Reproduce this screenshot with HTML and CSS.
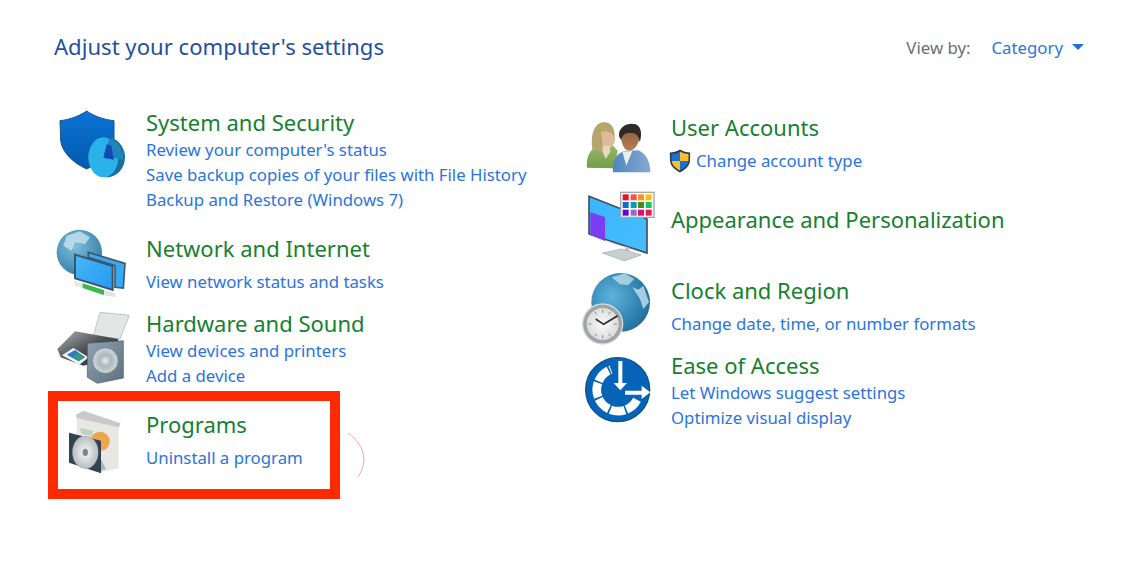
FILE: index.html

```html
<!DOCTYPE html>
<html lang="en">
<head>
    <meta charset="UTF-8">
    <title>Control Panel</title>
    <link rel="stylesheet" href="styles.css">
</head>
<body>
    <div class="page">
        <div class="header">
            <h1>Adjust your computer's settings</h1>
            <div class="view-by">
                <span class="view-label">View by:</span>
                <a href="#" class="view-value">Category</a>
                <span class="caret"></span>
            </div>
        </div>

        <div class="columns">
            <div class="column left-column">
                <div class="category">
                    <svg class="icon" viewBox="42 -15 240 240">
                        <defs>
                            <linearGradient id="shieldFill" x1="0" y1="0" x2="0" y2="1"><stop offset="0" stop-color="#0a74d6"/><stop offset="1" stop-color="#0459ad"/></linearGradient>
                        </defs>
                        <path d="M140 36C120 50 90 62 60 65L62 125C66 160 100 192 140 210C180 192 218 160 222 125L222 65C190 62 160 50 140 36Z" fill="url(#shieldFill)" stroke="#1b5488" stroke-width="3"/>
                        <ellipse cx="200" cy="175" rx="55" ry="60" fill="#17719f"/>
                        <ellipse cx="190" cy="175" rx="45" ry="60" fill="#2ab3ea"/>
                        <path d="M196 172L207 118C232 124 250 150 250 182Z" fill="#1f86bd"/>
                        <path d="M200 136L214 140L222 182L190 176Z" fill="#1249b5"/>
                    </svg>
                    <div class="text">
                        <a href="#" class="title">System and Security</a>
                        <a href="#" class="link">Review your computer's status</a>
                        <a href="#" class="link">Save backup copies of your files with File History</a>
                        <a href="#" class="link">Backup and Restore (Windows 7)</a>
                    </div>
                </div>

                <div class="category">
                    <svg class="icon" viewBox="42 -12 240 240">
                        <defs>
                            <radialGradient id="globeFill" cx="0.4" cy="0.35" r="0.75"><stop offset="0" stop-color="#7fc0dd"/><stop offset="1" stop-color="#2c78a2"/></radialGradient>
                            <linearGradient id="screenFill" x1="0" y1="0" x2="1" y2="1"><stop offset="0" stop-color="#49b7fb"/><stop offset="1" stop-color="#2399ee"/></linearGradient>
                        </defs>
                        <circle cx="118" cy="85" r="68" fill="url(#globeFill)"/>
                        <path d="M80 35L120 22L150 40L135 60L105 55L95 80L70 65Z" fill="#cfe6ef" opacity="0.75"/>
                        <path d="M145 85L255 118L250 192L225 190L225 125L145 100Z" fill="#39a8f4" stroke="#44596b" stroke-width="5"/>
                        <path d="M105 92L218 126L218 198L105 163Z" fill="url(#screenFill)" stroke="#3d5468" stroke-width="6"/>
                        <path d="M103 170L128 178L128 192L103 184Z" fill="#e3e8e8"/>
                        <path d="M128 178L192 198L192 214L128 192Z" fill="#3cb94c"/>
                        <path d="M192 198L226 208L226 220L192 214Z" fill="#dfe4e4"/>
                    </svg>
                    <div class="text">
                        <a href="#" class="title">Network and Internet</a>
                        <a href="#" class="link single">View network status and tasks</a>
                    </div>
                </div>

                <div class="category">
                    <svg class="icon" viewBox="42 213 240 240">
                        <defs>
                            <linearGradient id="printerBody" x1="0" y1="0" x2="1" y2="1"><stop offset="0" stop-color="#aeb3b6"/><stop offset="0.5" stop-color="#4a4e51"/><stop offset="1" stop-color="#26292b"/></linearGradient>
                            <linearGradient id="boxFill" x1="0" y1="0" x2="1" y2="1"><stop offset="0" stop-color="#8fa2af"/><stop offset="1" stop-color="#5b7180"/></linearGradient>
                            <radialGradient id="coneFill"><stop offset="0" stop-color="#e9eeee"/><stop offset="0.45" stop-color="#a9b7bb"/><stop offset="1" stop-color="#cfd8da"/></radialGradient>
                        </defs>
                        <path d="M180 265L268 274L240 345L160 335Z" fill="#e4e6e6" stroke="#a9adaf" stroke-width="2"/>
                        <path d="M52 375L105 322L235 345L225 400L130 425L62 400Z" fill="url(#printerBody)"/>
                        <path d="M66 394L100 372L146 400L118 422Z" fill="#f1f4f6"/>
                        <path d="M80 392L105 378L136 400L116 412Z" fill="#2b78cf"/>
                        <path d="M100 398L115 388L132 400L117 408Z" fill="#3f9f62"/>
                        <path d="M142 358L250 350L250 462L172 478L142 460Z" fill="url(#boxFill)" stroke="#48596a" stroke-width="2"/>
                        <circle cx="196" cy="410" r="38" fill="url(#coneFill)" stroke="#7b8c97" stroke-width="2"/>
                    </svg>
                    <div class="text">
                        <a href="#" class="title">Hardware and Sound</a>
                        <a href="#" class="link">View devices and printers</a>
                        <a href="#" class="link">Add a device</a>
                    </div>
                </div>

                <div class="category">
                    <svg class="icon" viewBox="42 36 240 240">
                        <defs>
                            <radialGradient id="discFill"><stop offset="0" stop-color="#8f989c"/><stop offset="0.25" stop-color="#e8ebec"/><stop offset="1" stop-color="#b4bbbe"/></radialGradient>
                        </defs>
                        <path d="M108 92L130 80L242 118L235 135L110 105Z" fill="#c9c9c9"/>
                        <path d="M110 102L236 130L236 252L178 266L110 240Z" fill="#e7e7e6"/>
                        <path d="M120 132L160 140L155 155L125 150Z" fill="#b9d3c1"/>
                        <circle cx="180" cy="172" r="29" fill="#eea64c"/>
                        <path d="M182 225L198 255L180 262Z" fill="#9fbdaa"/>
                        <path d="M87 146L183 170L183 268L87 236Z" fill="#33424f"/>
                        <ellipse cx="136" cy="205" rx="39" ry="50" fill="url(#discFill)"/>
                        <ellipse cx="136" cy="205" rx="8" ry="11" fill="#7d888d"/>
                    </svg>
                    <div class="text">
                        <a href="#" class="title">Programs</a>
                        <a href="#" class="link single">Uninstall a program</a>
                    </div>
                </div>
            </div>

            <div class="column right-column">
                <div class="category">
                    <svg class="icon" viewBox="15 -30 240 240">
                        <defs>
                            <linearGradient id="womanBody" x1="0" y1="0" x2="0" y2="1"><stop offset="0" stop-color="#97bb6a"/><stop offset="1" stop-color="#729c4b"/></linearGradient>
                            <linearGradient id="manBody" x1="0" y1="0" x2="1" y2="0"><stop offset="0" stop-color="#4f86c0"/><stop offset="1" stop-color="#86a9cf"/></linearGradient>
                            <linearGradient id="manFace" x1="0" y1="0" x2="0" y2="1"><stop offset="0" stop-color="#8a5a38"/><stop offset="1" stop-color="#b37f55"/></linearGradient>
                        </defs>
                        <path d="M36 176C32 140 48 116 78 106L112 108L128 125L118 178Z" fill="url(#womanBody)"/>
                        <path d="M52 120C46 80 56 40 88 40C116 40 122 70 118 100L100 124L72 128Z" fill="#b6a56c"/>
                        <path d="M78 70C90 62 112 68 120 88L112 112L98 122L84 112Z" fill="#dfbc98"/>
                        <path d="M84 110L104 110L106 128L92 150L82 126Z" fill="#ecd5bb"/>
                        <path d="M114 190C110 156 124 134 148 126L190 124C214 134 226 160 226 190Z" fill="url(#manBody)"/>
                        <path d="M142 128L172 126L154 170Z" fill="#e9eef1"/>
                        <path d="M138 86C136 62 150 50 170 52C188 54 196 70 192 92C188 112 172 130 156 124C146 118 140 104 138 86Z" fill="url(#manFace)"/>
                        <path d="M133 84C126 58 156 38 182 46C202 54 200 82 194 100C192 82 184 72 170 72C154 72 146 72 138 92Z" fill="#2e2a27"/>
                    </svg>
                    <div class="text">
                        <a href="#" class="title">User Accounts</a>
                        <div class="link-row single">
                            <svg class="uac-shield" viewBox="0 0 22 24">
                                <path d="M11 0.5C8 2.5 4 3.5 0.8 3.5L1 12C1.5 17 6 21 11 23.5C16 21 20.5 17 21 12L21.2 3.5C18 3.5 14 2.5 11 0.5Z" fill="#2d3a4a"/>
                                <path d="M11 2.5V12H2.5L2.4 5C5.5 4.8 8.5 4 11 2.5Z" fill="#1f6fd0"/>
                                <path d="M11 2.5C13.5 4 16.5 4.8 19.6 5L19.5 12H11Z" fill="#f5c22c"/>
                                <path d="M2.6 12H11V21.5C7 19.5 3.2 16.5 2.6 12Z" fill="#f5c22c"/>
                                <path d="M11 12H19.4C18.8 16.5 15 19.5 11 21.5Z" fill="#1f6fd0"/>
                            </svg>
                            <a href="#" class="link">Change account type</a>
                        </div>
                    </div>
                </div>

                <div class="category">
                    <svg class="icon" viewBox="15 246 240 240">
                        <defs>
                            <linearGradient id="monitorFill" x1="0" y1="0" x2="1" y2="1"><stop offset="0" stop-color="#3ab5ff"/><stop offset="1" stop-color="#47bdfd"/></linearGradient>
                        </defs>
                        <path d="M42 262L216 330L216 432L42 375Z" fill="url(#monitorFill)" stroke="#46505a" stroke-width="5"/>
                        <path d="M46 310L90 324L90 396L46 378Z" fill="#7d3df2"/>
                        <path d="M92 395L210 430L120 404Z" fill="#5a2ed0"/>
                        <path d="M150 412L164 416L164 432L150 430Z" fill="#c3c9cc"/>
                        <path d="M82 432L140 420L198 438L148 456Z" fill="#c9ced1" stroke="#a1a7aa" stroke-width="2"/>
                        <rect x="137" y="250" width="100" height="75" fill="#fff" stroke="#a3a6a8" stroke-width="4"/>
                        <rect x="143" y="256" width="18" height="18" fill="#e81123"/>
                        <rect x="167" y="256" width="18" height="18" fill="#f9504f"/>
                        <rect x="189" y="256" width="18" height="18" fill="#f7941d"/>
                        <rect x="212" y="256" width="18" height="18" fill="#ffc000"/>
                        <rect x="143" y="279" width="18" height="18" fill="#0d6fc4"/>
                        <rect x="167" y="279" width="18" height="18" fill="#0a99b5"/>
                        <rect x="189" y="279" width="18" height="18" fill="#4b8a14"/>
                        <rect x="212" y="279" width="18" height="18" fill="#12c76b"/>
                        <rect x="143" y="302" width="18" height="18" fill="#5b0bd0"/>
                        <rect x="167" y="302" width="18" height="18" fill="#8e6cc9"/>
                        <rect x="189" y="302" width="18" height="18" fill="#e0087f"/>
                        <rect x="212" y="302" width="18" height="18" fill="#e8185f"/>
                    </svg>
                    <div class="text">
                        <a href="#" class="title">Appearance and Personalization</a>
                    </div>
                </div>

                <div class="category">
                    <svg class="icon" viewBox="15 -21 240 240">
                        <defs>
                            <radialGradient id="earthFill" cx="0.35" cy="0.4" r="0.8"><stop offset="0" stop-color="#5cb3dc"/><stop offset="0.7" stop-color="#2a7ca8"/><stop offset="1" stop-color="#1f5f86"/></radialGradient>
                            <radialGradient id="faceFill"><stop offset="0" stop-color="#fafafa"/><stop offset="1" stop-color="#dcdcdc"/></radialGradient>
                        </defs>
                        <circle cx="137" cy="100" r="88" fill="url(#earthFill)"/>
                        <path d="M110 25L150 13L178 30L160 48L135 46Z" fill="#cfe8f1" opacity="0.7"/>
                        <path d="M172 55L190 62L205 50L222 100L205 120L195 90Z" fill="#cfe8f1" opacity="0.75"/>
                        <circle cx="83" cy="165" r="60" fill="#9fa3a6" stroke="#d8d9da" stroke-width="4"/>
                        <circle cx="83" cy="165" r="48" fill="url(#faceFill)"/>
                        <path d="M83 122V132M83 198V208M40 165H50M116 165H126M60 128L65 136M106 128L101 136M60 202L65 194M106 202L101 194" stroke="#8b8f92" stroke-width="3"/>
                        <path d="M62 150L86 166L128 140" fill="none" stroke="#2a2d30" stroke-width="5"/>
                    </svg>
                    <div class="text">
                        <a href="#" class="title">Clock and Region</a>
                        <a href="#" class="link single">Change date, time, or number formats</a>
                    </div>
                </div>

                <div class="category">
                    <svg class="icon" viewBox="15 204 240 240">
                        <circle cx="128" cy="362" r="96" fill="#0664b8" stroke="#0b4f8c" stroke-width="4"/>
                        <path d="M186 392A64 64 0 1 1 108 302" fill="none" stroke="#fff" stroke-width="26" stroke-dasharray="44 5"/>
                        <path d="M130 276H142V342H156L136 364L116 342H130Z" fill="#fff"/>
                        <path d="M150 365H200V350L226 370L200 390V377H150Z" fill="#fff"/>
                    </svg>
                    <div class="text">
                        <a href="#" class="title">Ease of Access</a>
                        <a href="#" class="link">Let Windows suggest settings</a>
                        <a href="#" class="link">Optimize visual display</a>
                    </div>
                </div>
            </div>
        </div>

        <div class="highlight"></div>
        <svg class="stray-arc" viewBox="0 0 24 48">
            <path d="M2 2C16 12 24 28 12 46" fill="none" stroke="#f5a898" stroke-width="1"/>
        </svg>
    </div>
</body>
</html>
```

FILE: styles.css

```css
body {
    font-family: "Noto Sans", "Open Sans", sans-serif;
    background-color: #fff;
    margin: 0;
    padding: 0;
}

a {
    text-decoration: none;
}

.page {
    position: relative;
    height: 565px;
    overflow: hidden;
}

.header {
    display: flex;
    justify-content: space-between;
    align-items: center;
    height: 94px;
    padding: 0 49px 0 54px;
}

h1 {
    margin: 0 0 3px 0;
    font-size: 22.1px;
    font-weight: normal;
    color: #1f4f9f;
}

.view-by {
    display: flex;
    align-items: center;
    font-size: 16.8px;
}

.view-label {
    color: #6b6f76;
    margin-right: 21px;
}

.view-value {
    color: #2a76dc;
}

.caret {
    width: 0;
    height: 0;
    margin-left: 9px;
    border-left: 6px solid transparent;
    border-right: 6px solid transparent;
    border-top: 6px solid #1a70d6;
}

.columns {
    display: flex;
    padding-top: 14px;
}

.column {
    display: grid;
}

.left-column {
    width: 526px;
    padding-left: 54px;
    grid-template-rows: 126px 75px 101px auto;
}

.right-column {
    padding-top: 5px;
    grid-template-rows: 92px 71px 75px auto;
}

.category {
    display: flex;
}

.icon {
    width: 80px;
    height: 80px;
    flex: none;
    margin-top: -14px;
    margin-right: 12px;
    overflow: visible;
    filter: blur(0.4px);
}

.right-column .icon {
    margin-right: 11px;
}

.text {
    display: flex;
    flex-direction: column;
}

.title {
    font-size: 22px;
    line-height: 29px;
    color: #16802f;
}

.link {
    font-size: 16.8px;
    line-height: 25px;
    color: #2b74dc;
}

.link-row {
    display: flex;
    align-items: center;
}

.single {
    margin-top: 6px;
}

.uac-shield {
    width: 22px;
    height: 24px;
    margin-left: -2px;
    margin-right: 5px;
}

.highlight {
    position: absolute;
    left: 48px;
    top: 391px;
    width: 272px;
    height: 88px;
    border: 10px solid #ff2a00;
}

.stray-arc {
    position: absolute;
    left: 346px;
    top: 431px;
    width: 24px;
    height: 48px;
}
```
